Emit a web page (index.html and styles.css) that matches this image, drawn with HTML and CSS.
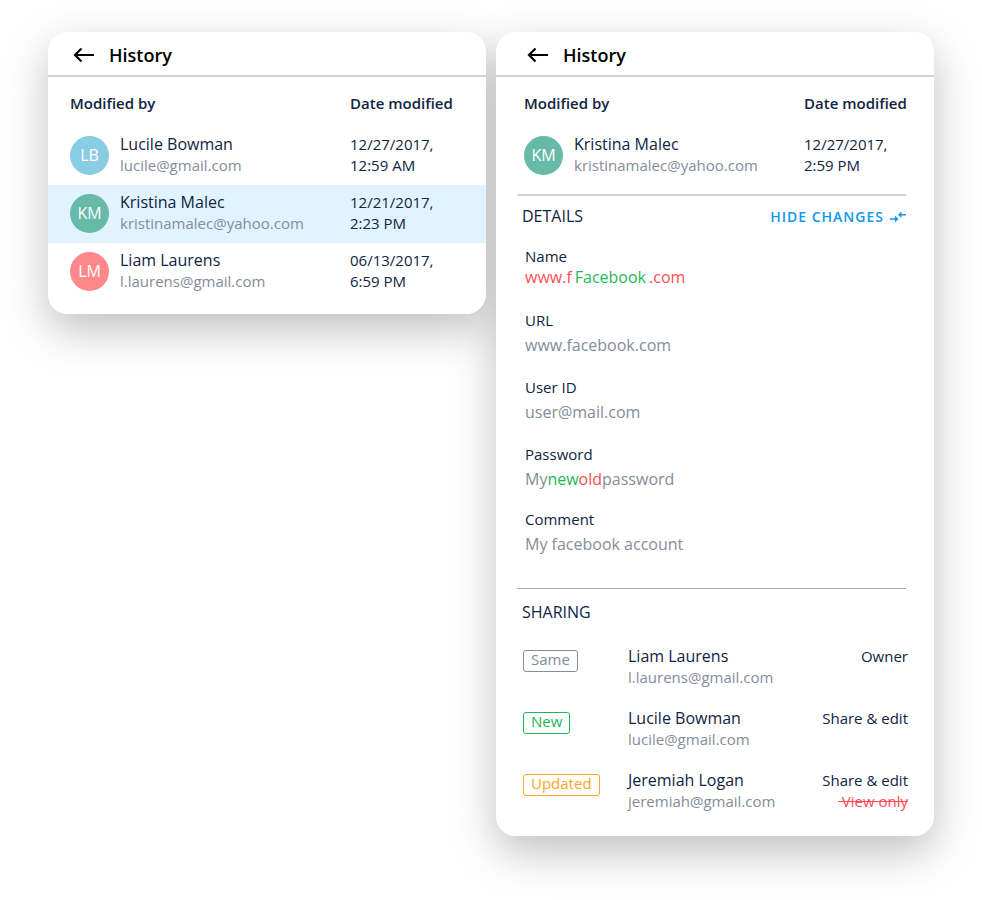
FILE: index.html
```html
<!DOCTYPE html>
<html lang="en">
<head>
    <meta charset="UTF-8">
    <meta name="viewport" content="width=device-width, initial-scale=1.0">
    <title>History</title>
    <link rel="stylesheet" href="styles.css">
</head>
<body>
    <main class="panels">
        <!-- History list -->
        <section class="card">
            <header class="card-header">
                <button type="button" class="back" aria-label="Back">
                    <svg width="22" height="16" viewBox="0 0 22 16"><path d="M21 8H2M8.500 1.500L2 8l6.500 6.500" fill="none" stroke="currentColor" stroke-width="2.200"/></svg>
                </button>
                <h1>History</h1>
            </header>
            <table class="history">
                <thead>
                    <tr><th>Modified by</th><th class="date">Date modified</th></tr>
                </thead>
                <tbody>
                    <tr>
                        <td>
                            <div class="user">
                                <span class="avatar blue">LB</span>
                                <div class="person"><strong>Lucile Bowman</strong><span>lucile@gmail.com</span></div>
                            </div>
                        </td>
                        <td class="date">12/27/2017,<br>12:59 AM</td>
                    </tr>
                    <tr class="selected">
                        <td>
                            <div class="user">
                                <span class="avatar green">KM</span>
                                <div class="person"><strong>Kristina Malec</strong><span>kristinamalec@yahoo.com</span></div>
                            </div>
                        </td>
                        <td class="date">12/21/2017,<br>2:23 PM</td>
                    </tr>
                    <tr>
                        <td>
                            <div class="user">
                                <span class="avatar red">LM</span>
                                <div class="person"><strong>Liam Laurens</strong><span>l.laurens@gmail.com</span></div>
                            </div>
                        </td>
                        <td class="date">06/13/2017,<br>6:59 PM</td>
                    </tr>
                </tbody>
            </table>
        </section>

        <!-- Selected version -->
        <section class="card card-detail">
            <header class="card-header">
                <button type="button" class="back" aria-label="Back">
                    <svg width="22" height="16" viewBox="0 0 22 16"><path d="M21 8H2M8.500 1.500L2 8l6.500 6.500" fill="none" stroke="currentColor" stroke-width="2.200"/></svg>
                </button>
                <h1>History</h1>
            </header>
            <table class="history">
                <thead>
                    <tr><th>Modified by</th><th class="date">Date modified</th></tr>
                </thead>
                <tbody>
                    <tr>
                        <td>
                            <div class="user">
                                <span class="avatar green">KM</span>
                                <div class="person"><strong>Kristina Malec</strong><span>kristinamalec@yahoo.com</span></div>
                            </div>
                        </td>
                        <td class="date">12/27/2017,<br>2:59 PM</td>
                    </tr>
                </tbody>
            </table>

            <section class="details">
                <div class="section-head">
                    <h2>DETAILS</h2>
                    <button type="button" class="toggle">
                        HIDE CHANGES
                        <svg width="16" height="12" viewBox="0 0 16 12" fill="currentColor"><path d="M8 3.800l3.500-3.300v2.600H16v1.400h-4.500v2.600zM8.500 8L5 4.700v2.600H0v1.400h5v2.600z"/></svg>
                    </button>
                </div>
                <dl>
                    <div class="field tight">
                        <dt>Name</dt>
                        <dd><del>www.f</del><ins class="spaced">Facebook</ins><del>.com</del></dd>
                    </div>
                    <div class="field">
                        <dt>URL</dt>
                        <dd>www.facebook.com</dd>
                    </div>
                    <div class="field">
                        <dt>User ID</dt>
                        <dd>user@mail.com</dd>
                    </div>
                    <div class="field">
                        <dt>Password</dt>
                        <dd>My<ins>new</ins><del>old</del>password</dd>
                    </div>
                    <div class="field">
                        <dt>Comment</dt>
                        <dd>My facebook account</dd>
                    </div>
                </dl>
            </section>

            <section class="sharing">
                <h2>SHARING</h2>
                <ul>
                    <li>
                        <div><span class="badge same">Same</span></div>
                        <div class="person"><strong>Liam Laurens</strong><span>l.laurens@gmail.com</span></div>
                        <div class="access">Owner</div>
                    </li>
                    <li>
                        <div><span class="badge new">New</span></div>
                        <div class="person"><strong>Lucile Bowman</strong><span>lucile@gmail.com</span></div>
                        <div class="access">Share &amp; edit</div>
                    </li>
                    <li>
                        <div><span class="badge updated">Updated</span></div>
                        <div class="person"><strong>Jeremiah Logan</strong><span>jeremiah@gmail.com</span></div>
                        <div class="access">Share &amp; edit<br><s>&nbsp;View only</s></div>
                    </li>
                </ul>
            </section>
        </section>
    </main>
</body>
</html>
```
FILE: styles.css
```css
* {
    box-sizing: border-box;
}
body {
    min-height: 100vh;
    margin: 0;
    background: #fff;
    color: #0f2442;
    font-family: "Open Sans", sans-serif;
    font-size: 15px;
    line-height: 21px;
}
h1, h2, dl, dd, ul {
    margin: 0;
    padding: 0;
}
button {
    border: none;
    background: none;
    padding: 0;
    font-family: inherit;
    cursor: pointer;
}
ins, del {
    text-decoration: none;
}
.panels {
    display: grid;
    grid-template-columns: 1fr 1fr;
    align-items: start;
    gap: 10px;
    min-height: 100vh;
    padding: 32px 48px;
    isolation: isolate;
}

/* Card */
.card {
    --inset: 22px;
    --date: 136px;
    position: relative;
    background: #fff;
    border-radius: 20px;
    padding-bottom: 13px;
}
.card::before {
    content: "";
    position: absolute;
    inset: 0;
    z-index: -1;
    border-radius: 20px;
    box-shadow: 0 16px 44px rgba(0, 0, 0, 0.25);
}
.card-detail {
    --inset: 28px;
    --date: 130px;
    padding-bottom: 24px;
}
.card-header {
    display: flex;
    align-items: center;
    gap: 14px;
    height: 45px;
    padding-top: 3px;
    padding-left: calc(var(--inset) + 3px);
    border-bottom: 2px solid #ced3d9;
}
.back {
    display: flex;
    color: #000;
}
h1 {
    color: #000;
    font-size: 18px;
    font-weight: 600;
}

/* History table */
.history {
    width: 100%;
    table-layout: fixed;
    border-collapse: collapse;
}
.history th {
    padding: 16px 0 13px var(--inset);
    font-weight: 600;
    text-align: left;
}
.history td {
    padding: 7px 0 9px var(--inset);
}
.history .date {
    width: var(--date);
    padding-left: 0;
}
.selected {
    background: #e1f3ff;
}
.user {
    display: flex;
    align-items: center;
    gap: 11px;
}
.avatar {
    width: 39px;
    height: 39px;
    border-radius: 50%;
    color: #fff;
    font-size: 16px;
    line-height: 39px;
    text-align: center;
}
.blue {
    background: #8acce2;
}
.green {
    background: #66baa7;
}
.red {
    background: #ff888b;
}
.person strong, .person span {
    display: block;
}
.person strong {
    font-size: 16px;
    font-weight: 400;
}
.person span {
    color: #848c9b;
}

/* Details */
.details, .sharing {
    margin: 9px 28px 0 21px;
    padding: 10px 0 0 5px;
    border-top: 2px solid #ced3d9;
}
.section-head {
    display: flex;
    justify-content: space-between;
    align-items: center;
}
h2 {
    font-size: 16px;
    font-weight: 400;
    line-height: 21px;
}
.toggle {
    display: flex;
    align-items: center;
    gap: 6px;
    color: #1098ee;
    font-size: 14px;
    font-weight: 600;
    letter-spacing: 1px;
}
dl {
    padding: 19px 0 0 3px;
}
.field {
    margin-bottom: 22px;
    line-height: 20px;
}
.field dd {
    margin-top: 5px;
    color: #848c9b;
    font-size: 16px;
}
.field.tight {
    margin-bottom: 23px;
}
.field.tight dd {
    margin-top: 1px;
}
.field:nth-last-child(2) {
    margin-bottom: 20px;
}
.field del, s {
    color: #ff4d52;
}
.field ins {
    color: #1fb856;
}
.field .spaced {
    margin: 0 3px;
}

/* Sharing */
.sharing {
    margin-top: 34px;
    border-top: 1px solid #a3adb5;
    padding-top: 13px;
}
.sharing ul {
    display: grid;
    gap: 20px;
    padding: 23px 0 0 1px;
    list-style: none;
}
.sharing li {
    display: grid;
    grid-template-columns: 105px 1fr auto;
    margin-right: -2px;
}
.badge {
    display: inline-block;
    height: 22px;
    margin-top: 4px;
    padding: 0 7px;
    border: 1px solid;
    border-radius: 3px;
    line-height: 17px;
}
.same {
    color: #848c9b;
}
.new {
    color: #1fb856;
}
.updated {
    color: #f5a623;
}
.access {
    text-align: right;
}
```
